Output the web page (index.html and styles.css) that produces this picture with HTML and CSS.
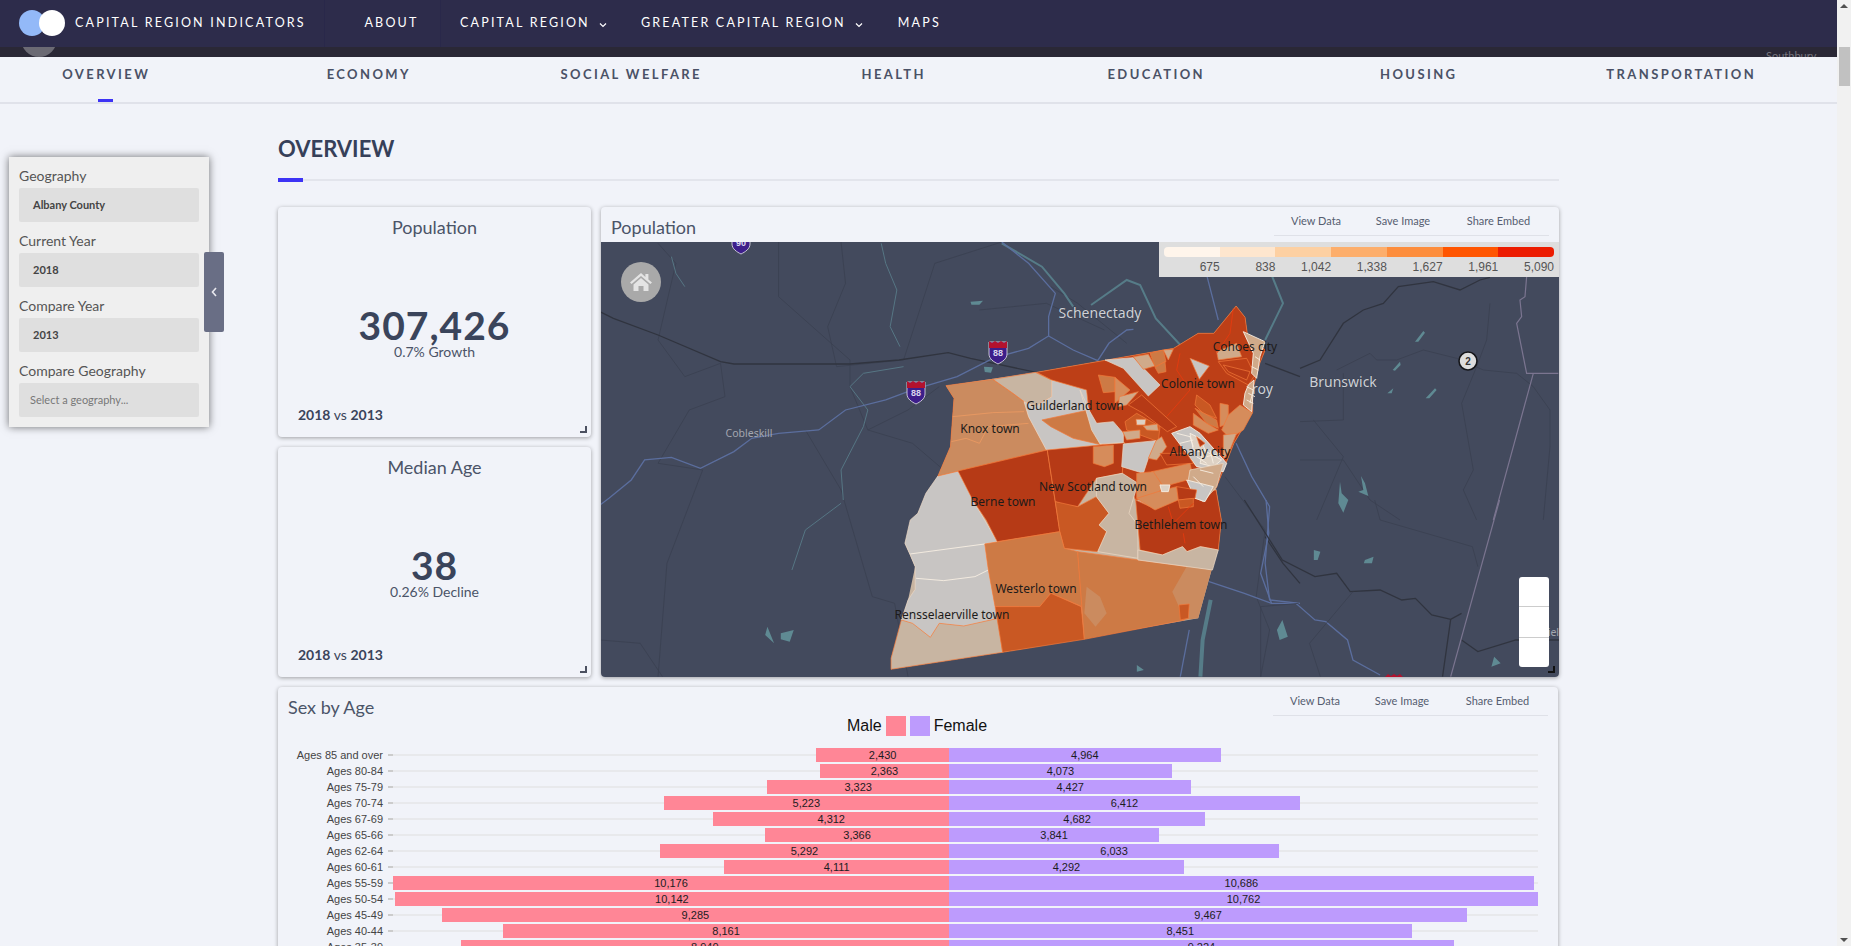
FILE: index.html
```html
<!DOCTYPE html>
<html lang="en">
<head>
    <meta charset="UTF-8">
    <title>Capital Region Indicators</title>
    <link rel="stylesheet" href="styles.css">
</head>
<body>
<div class="frame">
<div class="page">
    <div class="topnav">
        <a class="brand">
            <span class="logo"><i class="dot-blue"></i><i class="dot-white"></i></span>
            CAPITAL REGION INDICATORS
        </a>
        <a class="nav-about">ABOUT</a>
        <a class="nav-capital">CAPITAL REGION <svg class="caret" viewBox="0 0 8 6"><path d="M1 1.5 4 4.5 7 1.5"/></svg></a>
        <a class="nav-greater">GREATER CAPITAL REGION <svg class="caret" viewBox="0 0 8 6"><path d="M1 1.5 4 4.5 7 1.5"/></svg></a>
        <a class="nav-maps">MAPS</a>
    </div>
    <div class="hero-strip">
        <span class="hero-circle"></span>
        <span class="hero-town">Southbury</span>
    </div>
    <div class="subnav">
        <div class="subnav-inner">
            <a class="active">OVERVIEW</a>
            <a>ECONOMY</a>
            <a>SOCIAL WELFARE</a>
            <a>HEALTH</a>
            <a>EDUCATION</a>
            <a>HOUSING</a>
            <a>TRANSPORTATION</a>
        </div>
    </div>

    <div class="layout">
        <div class="side">
            <div class="filters">
                <label>Geography</label>
                <div class="fake-select">Albany County</div>
                <label>Current Year</label>
                <div class="fake-select">2018</div>
                <label>Compare Year</label>
                <div class="fake-select">2013</div>
                <label>Compare Geography</label>
                <div class="fake-select placeholder">Select a geography...</div>
                <div class="filters-toggle">
                    <svg viewBox="0 0 8 12"><path d="M6 2 2.5 6 6 10"/></svg>
                </div>
            </div>
        </div>

        <div class="main">
            <h1 class="section-title">OVERVIEW</h1>
            <div class="section-rule"><span></span></div>

            <div class="top-row">
                <div class="stat-col">
                    <div class="card stat">
                        <h3>Population</h3>
                        <div class="stat-mid">
                            <div class="stat-num">307,426</div>
                            <div class="stat-sub">0.7% Growth</div>
                        </div>
                        <div class="stat-foot"><b>2018</b> vs <b>2013</b></div>
                    </div>
                    <div class="card stat">
                        <h3>Median Age</h3>
                        <div class="stat-mid">
                            <div class="stat-num">38</div>
                            <div class="stat-sub">0.26% Decline</div>
                        </div>
                        <div class="stat-foot"><b>2018</b> vs <b>2013</b></div>
                    </div>
                </div>

                <div class="card map-card">
                    <div class="card-head">
                        <h2>Population</h2>
                        <div class="tabs"><a>View Data</a><a>Save Image</a><a>Share Embed</a></div>
                    </div>
                    <div class="map">
                        <svg class="map-svg" viewBox="601 242 958 435" width="958" height="435">
                            <!-- background roads, coords taken from zoomed crops -->
                            <g transform="translate(600 230) scale(.4464 .3333)">
                                <path class="road-thin" d="M130 40 170 100 130 330 190 440 270 400 280 500 200 540 130 700 230 720 150 1000 130 1340"/>
                                <path class="road-thin" d="M400 36 400 200 560 390 560 470 600 600 700 640 770 720 800 640"/>
                                <path class="road-thin" d="M540 36 550 160 510 290 530 410 680 390 750 100 900 36"/>
                                <path class="road-thin" d="M460 600 540 780 610 1100 660 1120 690 1340"/>
                                <path class="road-thin" d="M0 1230 90 1240 140 1340M600 600 690 540 760 470"/>
                                <path class="road-thin" d="M1010 170 1070 220 1180 340M850 240 1000 220 1130 300"/>
                                <path class="road-thick" d="M0 245 30 265 130 315 270 395 300 402 560 402 670 390 780 368 830 385 980 428"/>
                                <path class="road-thick" d="M1400 140 1370 60M1490 400 1568 440M1490 920 1530 1000 1568 1060"/>
                                <path class="road-thin" d="M1400 740 1490 900 1470 1100 1500 1200 1480 1340"/>
                                <path class="water-line" d="M630 40 640 100 665 180 650 290 672 350"/>
                                <path class="water-line" d="M160 80 170 130 190 170M545 810 540 720 590 590 600 540 560 470 590 430 680 410"/>
                                <path class="water-line" d="M430 1020 460 900 540 820"/>
                                <path class="water-wide" d="M1100 225 1180 150 1210 165 1245 265 1300 345"/>
                                <path class="water-wide" d="M1500 120 1530 220 1490 330"/>
                                <path class="water-wide" d="M900 40 990 110 1040 190 1060 230"/>
                                <path class="water-wide big" d="M1368 1110 1350 1230 1345 1340"/>
                                <path class="river" d="M0 825 20 805 70 750 100 690 160 682 225 715 300 665 340 625 400 610 490 600 550 540 640 510 700 480 800 440 880 385 960 355 1005 318 1005 260 1020 190 960 100 900 36"/>
                                <path class="river" d="M1005 318 1060 360 1115 392 1140 340 1180 300 1195 298"/>
                                <path class="river" d="M1360 140 1385 270M1425 640 1460 740 1500 830 1490 1000 1500 1110 1568 1120"/>
                                <path class="river" d="M1300 1340 1320 1200"/>
                                <path class="lake" d="M830 215 858 212 850 224 832 224zM860 410 880 412 876 428 862 426zM375 1190 390 1240 370 1215zM405 1210 434 1200 425 1235 405 1228z"/>
                            </g>
                            <g transform="translate(1000 500) scale(.543 .3333)">
                                <path class="river" d="M385 245 450 280 500 310 545 310 580 360 600 365 640 420 650 480 700 525"/>
                                <path class="river" d="M490 0 495 100 480 220 500 310"/>
                                <path class="road-thick" d="M450 0 520 180 580 230 620 220 645 275 700 270 740 300 765 295 795 345 830 358 850 340"/>
                                <path class="road-thick" d="M830 358 815 530M850 420 880 455 950 420 1030 420"/>
                                <path class="road-thin" d="M690 0 700 60 870 140 880 200M650 275 570 430 590 530M480 530 480 320 550 310"/>
                                <path class="state-line" d="M920 0 830 530"/>
                                <path class="lake" d="M578 150 590 155 585 180 578 180zM672 180 688 170 685 190 670 190zM520 360 530 410 515 420 510 390zM910 470 922 490 905 500zM252 495 265 510 252 515z"/>
                            </g>
                            <g transform="translate(1300 240) scale(.3333)">
                                <path class="road-thick" d="M0 385 60 360 130 250 190 210 250 190 295 140 400 125 480 150 540 120 570 112"/>
                                <path class="road-thin" d="M570 190 560 300 530 380 485 490 520 690 490 750 530 840"/>
                                <path class="road-thin" d="M110 390 210 340 230 360 290 360 370 330 470 355 550 390 650 400 700 440 750 510 750 620 730 840"/>
                                <path class="road-thin" d="M130 400 130 540 0 545M0 660 130 660 210 780 300 840M40 540 130 650 50 840"/>
                                <path class="state-line" d="M680 110 675 170 660 180 665 230 650 250 680 400 775 400M700 400 580 840"/>
                                <path class="lake" d="M345 305 370 273 375 278 355 305zM278 390 300 365 302 375 285 392zM262 460 280 445 275 460zM377 475 405 445 410 450 388 475zM120 725 125 760 145 780 130 818 115 790zM183 708 195 730 205 768 175 755 190 750z"/>
                            </g>
                            <text class="lbl-city" x="1259" y="394">Troy</text>

                            <!-- county blocks -->
                            <g class="towns" transform="translate(600 230) scale(.4464 .3333)">
                                <polygon class="f-sand line-none" points="775,467 978,427 1285,355 1340,310 1375,310 1425,228 1445,262 1450,310 1490,360 1478,400 1462,480 1462,545 1420,640 1380,775 1392,870 1385,960 1370,1020 1340,1165 902,1267 652,1318 652,1285 690,1110 706,1010 683,940 712,850 757,738 785,650 793,505"/>
                                <polygon class="f-grey line-pale" points="757,738 802,723 835,810 890,935 862,942 870,1020 885,1130 892,1165 815,1188 760,1180 740,1222 700,1180 675,1170 690,1110 706,1078 706,1010 695,975 683,940 695,870 712,850 730,790"/>
                                <path class="line-white" d="M695 972 862 942M708 1045 770 1052 840 1040 870 1020"/>
                                <polygon class="f-sand" points="675,1170 700,1180 740,1222 760,1180 815,1188 892,1165 902,1267 652,1318 652,1285"/>
                                <polygon class="f-knox" points="775,467 880,448 925,490 950,515 960,560 1000,660 757,738 785,650 793,505"/>
                                <path class="line-orange" d="M787 635 820 625 850 640 870 590 960 580M790 560 880 548 950 545"/>
                                <polygon class="f-sand" points="880,448 975,427 1012,450 1012,500 975,530 950,515 925,490"/>
                                <polygon class="f-grey line-pale" points="1012,450 1090,475 1095,540 1130,620 1125,645 1000,660 960,560 950,515 975,530 1012,500"/>
                                <polygon class="f-mid" points="990,570 1095,540 1125,645 1060,625 1010,590"/>
                                <polygon class="f-deep" points="802,723 1002,660 1030,905 890,935 865,870 835,810"/>
                                <polygon class="f-base" points="978,427 1285,355 1340,310 1375,310 1425,228 1445,262 1450,310 1490,360 1478,400 1462,480 1462,545 1420,640 1380,775 1200,810 1170,730 1175,638 1125,645 1095,540 1090,480 1012,450"/>
                                <polygon class="f-deep" points="1002,660 1175,638 1170,730 1112,745 1070,830 1040,825 1020,815"/>
                                <polygon class="f-light" points="1105,650 1150,645 1150,700 1130,710 1105,700"/>
                                <polygon class="f-strong" points="1020,815 1070,830 1112,800 1140,850 1118,885 1135,905 1115,965 1040,955 1030,905"/>
                                <polygon class="f-sand line-pale" points="1112,745 1170,730 1205,760 1185,850 1205,885 1205,985 1115,965 1135,905 1118,885 1140,850 1112,800"/>
                                <polygon class="f-mid" points="862,942 1030,905 1040,955 1070,965 1080,1130 1010,1090 985,1130 940,1130 885,1130 870,1020"/>
                                <polygon class="f-strong" points="885,1130 940,1130 985,1130 1010,1090 1078,1130 1085,1228 902,1267"/>
                                <polygon class="f-mid" points="1070,965 1205,990 1315,1010 1290,1080 1310,1170 1085,1228"/>
                                <polygon class="f-knox line-none" points="1090,1070 1120,1100 1135,1150 1110,1190 1085,1150"/>
                                <polygon class="f-knox line-none" points="1315,1008 1370,1020 1340,1165 1310,1170 1282,1085"/>
                                <polygon class="f-strong" points="1297,1125 1320,1122 1318,1165 1300,1170"/>
                                <polygon class="f-deep" points="1200,810 1240,835 1290,810 1380,780 1392,870 1385,960 1345,950 1315,965 1305,950 1260,975 1210,960 1205,885"/>
                                <polygon class="f-sand line-pale" points="1205,960 1260,975 1305,950 1315,965 1345,950 1385,960 1372,1020 1205,990"/>
                            </g>
                            <g class="towns" transform="translate(1080 290) scale(.3333)">
                                <polygon class="f-grey line-pale" points="75,210 160,203 240,285 205,318 130,235"/>
                                <polygon class="f-tan" points="160,200 205,193 225,228 190,238"/>
                                <polygon class="f-mid" points="210,190 250,180 258,215 225,230"/>
                                <polygon class="f-mid" points="225,232 255,215 258,245 235,250"/>
                                <polygon class="f-tan" points="250,180 280,178 265,210"/>
                                <polygon class="f-grey" points="330,205 388,228 358,268"/>
                                <polygon class="f-mid" points="55,255 105,262 105,305 70,308"/>
                                <polygon class="f-light" points="105,262 150,300 105,340 105,305"/>
                                <polygon class="f-grey line-pale" points="0,300 30,365 50,400 100,395 130,430 130,458 60,462 35,420"/>
                                <polygon class="f-tan" points="118,320 175,305 140,345 115,350"/>
                                <polygon class="f-strong" points="135,395 170,370 240,410 235,455 140,420"/>
                                <polygon class="f-deep" points="145,345 185,315 290,410 262,425 190,370"/>
                                <polygon class="f-tan" points="128,425 180,420 180,445 140,450"/>
                                <polygon class="f-pale" points="168,388 198,388 195,405 170,405"/>
                                <polygon class="f-tan" points="190,408 232,402 235,422 200,420"/>
                                <polygon class="f-grey line-pale" points="130,462 228,452 205,505 190,550 125,530"/>
                                <polygon class="f-tan" points="228,452 245,440 260,470 230,510 205,505"/>
                                <polygon class="f-strong" points="350,315 390,345 410,385 370,370 345,345"/>
                                <polygon class="f-base" points="415,215 500,205 525,255 505,285 440,250"/>
                                <polygon class="f-deep" points="430,225 510,245 500,270 445,245"/>
                                <polygon class="f-tan" points="410,185 470,160 485,200 415,210"/>
                                <polygon class="f-light" points="420,340 445,345 445,400 420,410"/>
                                <polygon class="f-mid" points="345,355 410,390 415,415 380,400"/>
                                <polygon class="f-light" points="340,370 380,400 415,420 385,430 340,405"/>
                                <polygon class="f-light" points="480,345 518,368 490,420 450,445 425,420 445,375"/>
                                <polygon class="f-tan" points="430,435 470,430 450,480 430,510"/>
                                <polygon class="f-tan line-white" points="505,285 522,270 515,365 490,345 495,310"/>
                                <polygon class="f-tan line-white" points="490,125 555,155 540,200 530,265 515,250 520,190"/>
                                <polygon class="f-grey line-white" points="275,430 330,410 360,430 440,520 430,545 350,530 320,490"/>
                                <polygon class="f-pale line-white" points="330,430 360,445 380,490 340,480"/>
                                <polygon class="f-pale line-white" points="370,480 425,510 400,530 360,520"/>
                                <polygon class="f-deep" points="350,440 375,460 360,470"/>
                                <polygon class="f-deep" points="240,490 320,490 340,520 260,525"/>
                                <polygon class="f-light" points="215,545 330,520 340,565 250,590"/>
                                <polygon class="f-tan line-pale" points="330,540 430,520 410,590 370,635 340,620 325,570"/>
                                <polygon class="f-grey line-white" points="320,570 400,590 375,635 345,625"/>
                                <polygon class="f-light" points="170,550 220,545 250,590 225,620 170,625"/>
                                <polygon class="f-light" points="170,625 250,600 290,590 295,630 225,660"/>
                                <polygon class="f-deep" points="290,590 350,600 345,625 295,630"/>
                                <polygon class="f-strong" points="295,630 340,625 340,650 300,655"/>
                                <polygon class="f-pale line-white" points="240,585 270,585 265,605 245,605"/>
                                <path class="line-red" d="M460 55 450 130 410 190M300 190 290 240 330 300 260 380M310 730 315 760M265 650 280 700 340 640"/>
                                <path class="line-white" d="M500 290 520 300 510 340M525 200 540 210M515 230 535 240M505 310 525 320M500 330 520 340M290 430 330 440 340 470M300 460 340 450M380 500 420 490M400 520 390 480M350 500 380 520M360 540 400 550M340 560 370 590"/>
                            </g>

                            <!-- shields -->
                            <g class="shield" transform="translate(741 241)"><path class="shield-body" d="M-9 -9H9V3C9 8 4 11 0 13 -4 11 -9 8 -9 3Z"/><text y="5">90</text></g>
                            <g class="shield" transform="translate(916 391)"><path class="shield-body" d="M-9 -9H9V3C9 8 4 11 0 13 -4 11 -9 8 -9 3Z"/><path class="shield-top" d="M-9 -10 -6 -8 -3 -10 0 -8 3 -10 6 -8 9 -10V-3H-9Z"/><text y="5">88</text></g>
                            <g class="shield" transform="translate(998 351)"><path class="shield-body" d="M-9 -9H9V3C9 8 4 11 0 13 -4 11 -9 8 -9 3Z"/><path class="shield-top" d="M-9 -10 -6 -8 -3 -10 0 -8 3 -10 6 -8 9 -10V-3H-9Z"/><text y="5">88</text></g>
                            <path class="shield-top" d="M1385 677 1388 674 1391 676 1394 674 1397 676 1400 674 1403 677Z"/>

                            <g class="badge"><circle cx="1468" cy="361" r="9"/><text x="1468" y="365">2</text></g>

                            <text class="lbl-city" x="1100" y="318">Schenectady</text>
                            <text class="lbl-city" x="1343" y="387">Brunswick</text>
                            <text class="lbl-small" x="749" y="437">Cobleskill</text>
                            <text class="lbl-small" x="1544" y="636">Pittsfield</text>

                            <text class="lbl-town" x="1245" y="351">Cohoes city</text>
                            <text class="lbl-town" x="1198" y="388">Colonie town</text>
                            <text class="lbl-town" x="1075" y="410">Guilderland town</text>
                            <text class="lbl-town" x="990" y="433">Knox town</text>
                            <text class="lbl-town" x="1200" y="456">Albany city</text>
                            <text class="lbl-town" x="1093" y="491">New Scotland town</text>
                            <text class="lbl-town" x="1003" y="506">Berne town</text>
                            <text class="lbl-town" x="1181" y="529">Bethlehem town</text>
                            <text class="lbl-town" x="1036" y="593">Westerlo town</text>
                            <text class="lbl-town" x="952" y="619">Rensselaerville town</text>
                        </svg>

                        <div class="home-btn">
                            <svg viewBox="0 0 24 24"><path d="M12 3 1 12.5l1.6 1.6L12 6l9.4 8.1 1.6-1.6-3.6-3.1V4h-3v3zM4.5 14.5 12 8l7.5 6.5V21h-5v-5h-5v5h-5z"/></svg>
                        </div>
                        <div class="map-legend">
                            <div class="legend-bar">
                                <i class="c1"></i><i class="c2"></i><i class="c3"></i><i class="c4"></i><i class="c5"></i><i class="c6"></i><i class="c7"></i>
                            </div>
                            <div class="legend-labels">
                                <span>675</span><span>838</span><span>1,042</span><span>1,338</span><span>1,627</span><span>1,961</span><span>5,090</span>
                            </div>
                        </div>
                        <div class="zoom-ctrl"><span></span><span></span><span></span></div>
                    </div>
                </div>
            </div>

            <div class="card chart-card">
                <div class="card-head chart-head">
                    <h2>Sex by Age</h2>
                    <div class="tabs"><a>View Data</a><a>Save Image</a><a>Share Embed</a></div>
                </div>
                <div class="chart-legend">
                    <span>Male</span><i class="swatch-m"></i><i class="swatch-f"></i><span>Female</span>
                </div>
                <div class="pyramid">
                    <div class="row"><div class="age">Ages 85 and over</div><div class="half left"><div class="bar m" style="width:23.88%">2,430</div></div><div class="half right"><div class="bar f" style="width:46.13%">4,964</div></div></div>
                    <div class="row"><div class="age">Ages 80-84</div><div class="half left"><div class="bar m" style="width:23.22%">2,363</div></div><div class="half right"><div class="bar f" style="width:37.85%">4,073</div></div></div>
                    <div class="row"><div class="age">Ages 75-79</div><div class="half left"><div class="bar m" style="width:32.66%">3,323</div></div><div class="half right"><div class="bar f" style="width:41.14%">4,427</div></div></div>
                    <div class="row"><div class="age">Ages 70-74</div><div class="half left"><div class="bar m" style="width:51.33%">5,223</div></div><div class="half right"><div class="bar f" style="width:59.58%">6,412</div></div></div>
                    <div class="row"><div class="age">Ages 67-69</div><div class="half left"><div class="bar m" style="width:42.37%">4,312</div></div><div class="half right"><div class="bar f" style="width:43.5%">4,682</div></div></div>
                    <div class="row"><div class="age">Ages 65-66</div><div class="half left"><div class="bar m" style="width:33.08%">3,366</div></div><div class="half right"><div class="bar f" style="width:35.69%">3,841</div></div></div>
                    <div class="row"><div class="age">Ages 62-64</div><div class="half left"><div class="bar m" style="width:52%">5,292</div></div><div class="half right"><div class="bar f" style="width:56.06%">6,033</div></div></div>
                    <div class="row"><div class="age">Ages 60-61</div><div class="half left"><div class="bar m" style="width:40.4%">4,111</div></div><div class="half right"><div class="bar f" style="width:39.88%">4,292</div></div></div>
                    <div class="row"><div class="age">Ages 55-59</div><div class="half left"><div class="bar m" style="width:100%">10,176</div></div><div class="half right"><div class="bar f" style="width:99.29%">10,686</div></div></div>
                    <div class="row"><div class="age">Ages 50-54</div><div class="half left"><div class="bar m" style="width:99.67%">10,142</div></div><div class="half right"><div class="bar f" style="width:100%">10,762</div></div></div>
                    <div class="row"><div class="age">Ages 45-49</div><div class="half left"><div class="bar m" style="width:91.24%">9,285</div></div><div class="half right"><div class="bar f" style="width:87.97%">9,467</div></div></div>
                    <div class="row"><div class="age">Ages 40-44</div><div class="half left"><div class="bar m" style="width:80.2%">8,161</div></div><div class="half right"><div class="bar f" style="width:78.53%">8,451</div></div></div>
                    <div class="row"><div class="age">Ages 35-39</div><div class="half left"><div class="bar m" style="width:87.85%">8,940</div></div><div class="half right"><div class="bar f" style="width:85.71%">9,224</div></div></div>
                </div>
            </div>
        </div>
    </div>
</div>
<div class="scroll-track">
    <span class="arrow-up"></span>
    <span class="scroll-thumb"></span>
    <span class="arrow-down"></span>
</div>
</div>
</body>
</html>
```

FILE: styles.css
```css
* {
    box-sizing: border-box;
}
html, body {
    margin: 0;
    height: 100%;
    overflow: hidden;
}
body {
    font-family: Lato, "Open Sans", sans-serif;
    background-color: #f1f3f9;
    color: #3c4559;
}
.frame {
    display: flex;
    height: 100vh;
    overflow: hidden;
}
.page {
    flex: 1;
    min-width: 0;
    overflow: hidden;
}

/* top bar */
.topnav {
    height: 47px;
    background-color: #2d2c4b;
    color: #fff;
    display: flex;
    align-items: center;
    font-size: 12.5px;
    letter-spacing: 2.2px;
    white-space: nowrap;
}
.topnav a {
    display: flex;
    align-items: center;
    height: 100%;
    padding-bottom: 3px;
}
.brand {
    width: 325px;
    padding-left: 19px;
    border-right: 1px solid #29284a;
}
.logo {
    display: flex;
    width: 46px;
    margin: 2px 10px 0 0;
}
.logo i {
    width: 26px;
    height: 26px;
    border-radius: 50%;
    flex: none;
}
.dot-blue {
    background-color: #93b9f8;
}
.dot-white {
    background-color: #fff;
    margin-left: -6px;
}
.nav-about {
    width: 116px;
    padding-left: 18px;
    justify-content: center;
    border-right: 1px solid #29284a;
}
.nav-capital {
    margin-left: 19px;
}
.nav-greater {
    margin-left: 34px;
}
.nav-maps {
    margin-left: 35px;
}
.caret {
    width: 8px;
    height: 6px;
    margin: 5px 0 0 9px;
    fill: none;
    stroke: #fff;
    stroke-width: 1.2;
}

.hero-strip {
    height: 10px;
    background-color: #2a2836;
    position: relative;
    overflow: hidden;
}
.hero-circle {
    position: absolute;
    left: 21px;
    top: -26px;
    width: 36px;
    height: 36px;
    border-radius: 50%;
    background-color: #6b6a74;
}
.hero-town {
    position: absolute;
    left: 1766px;
    top: 2px;
    font-size: 11px;
    color: #77767f;
}

/* section tabs */
.subnav {
    height: 47px;
    border-bottom: 2px solid #e0e2ea;
    overflow: hidden;
}
.subnav-inner {
    display: grid;
    grid-template-columns: repeat(7, 262.5px);
    margin-left: -25px;
    height: 45px;
}
.subnav a {
    position: relative;
    text-align: center;
    font-size: 13px;
    font-weight: 700;
    letter-spacing: 2.4px;
    color: #4a5166;
    padding-top: 9px;
}
.subnav a.active::after {
    content: "";
    position: absolute;
    left: 50%;
    bottom: 0;
    width: 15px;
    height: 3px;
    margin-left: -8px;
    background-color: #3d33f5;
}

.layout {
    display: flex;
}
.side {
    width: 278px;
    flex: none;
    padding: 53px 0 0 9px;
}
.filters {
    position: relative;
    width: 200px;
    height: 270px;
    padding: 10px;
    background-color: #efefef;
    box-shadow: 0 0 8px rgba(0, 0, 0, 0.55);
}
.filters label {
    display: block;
    height: 21px;
    line-height: 18px;
    font-size: 14px;
    color: #555;
}
.fake-select {
    height: 34px;
    margin-bottom: 10px;
    padding: 0 14px;
    line-height: 33px;
    font-size: 11px;
    font-weight: 700;
    color: #444;
    background-color: #dfdfdf;
    border-radius: 2px;
}
.fake-select.placeholder {
    padding: 0 11px;
    font-weight: 400;
    color: #777;
}
.filters-toggle {
    position: absolute;
    left: 195px;
    top: 95px;
    width: 20px;
    height: 80px;
    background-color: #696e85;
    border-radius: 2px;
    display: flex;
    align-items: center;
    justify-content: center;
}
.filters-toggle svg {
    width: 8px;
    height: 12px;
    fill: none;
    stroke: #e8e8ee;
    stroke-width: 1.6;
}

.main {
    width: 1281px;
    flex: none;
}
.section-title {
    margin: 0;
    padding-top: 30px;
    height: 75px;
    line-height: 30px;
    font-size: 22px;
    font-weight: 700;
    color: #364059;
}
.section-rule {
    height: 2px;
    background-color: #e3e5ec;
    position: relative;
}
.section-rule span {
    position: absolute;
    left: 0;
    top: -1px;
    width: 25px;
    height: 4px;
    background-color: #3d33f5;
}

.card {
    position: relative;
    background-color: #f1f3f9;
    border-radius: 4px;
    box-shadow: 0 1px 4px rgba(0, 0, 0, 0.35);
}
.card::after {
    content: "";
    position: absolute;
    right: 4px;
    bottom: 4px;
    width: 5px;
    height: 5px;
    border-right: 2px solid #4b5060;
    border-bottom: 2px solid #4b5060;
}
.top-row {
    display: flex;
    gap: 10px;
    margin-top: 26px;
    height: 470px;
}
.stat-col {
    width: 313px;
    display: flex;
    flex-direction: column;
    gap: 10px;
}
.stat {
    height: 230px;
    padding: 9px 20px 0;
    text-align: center;
}
.stat h3 {
    margin: 0;
    height: 22px;
    line-height: 22px;
    font-size: 18px;
    font-weight: 400;
    color: #4b5468;
}
.stat-mid {
    padding-top: 66px;
    height: 137px;
}
.stat-num {
    font-size: 39px;
    line-height: 42px;
    font-weight: 700;
    color: #3a445b;
    letter-spacing: 1px;
}
.stat-sub {
    margin-top: -2px;
    line-height: 16px;
    font-size: 14px;
    color: #4b5468;
}
.stat-foot {
    margin-top: 32px;
    line-height: 16px;
    text-align: left;
    font-size: 14px;
    color: #3a445b;
}

.map-card {
    width: 958px;
    overflow: hidden;
}
.map-card::after {
    border-color: #111;
    z-index: 2;
}
.card-head {
    height: 35px;
    display: flex;
    justify-content: space-between;
    padding: 0 10px 0 10px;
}
.card-head h2 {
    margin: 0;
    padding-top: 9px;
    font-size: 18px;
    line-height: 22px;
    font-weight: 400;
    color: #4b5468;
}
.tabs {
    width: 275px;
    height: 29px;
    display: grid;
    grid-template-columns: 84px 90px 101px;
    font-size: 11px;
    line-height: 28px;
    text-align: center;
    color: #555d70;
    border-bottom: 1px solid #dfe1e8;
}
.map {
    position: relative;
    height: 435px;
    background-color: #434a5d;
    overflow: hidden;
}
.map-svg {
    display: block;
}
.map-svg * {
    vector-effect: non-scaling-stroke;
}
.road-thin {
    fill: none;
    stroke: #3a4051;
    stroke-width: 0.8;
}
.road-thick {
    fill: none;
    stroke: #30343f;
    stroke-width: 1.3;
}
.river {
    fill: none;
    stroke: #5b6e9e;
    stroke-width: 1.3;
}
.water-line {
    fill: none;
    stroke: #567684;
    stroke-width: 1;
}
.water-wide {
    fill: none;
    stroke: #567c88;
    stroke-width: 2;
}
.water-wide.big {
    stroke-width: 4;
}
.lake {
    fill: #5f8a93;
}
.state-line {
    fill: none;
    stroke: #7b7590;
    stroke-width: 1.2;
}
.towns polygon {
    stroke: #f2793a;
    stroke-width: 0.7;
}
.towns path {
    fill: none;
}
.towns .line-pale {
    stroke: #ecd9c4;
}
.towns .line-white {
    stroke: #f7eee2;
    stroke-width: 0.9;
}
.towns .line-orange {
    stroke: #ee9a62;
    stroke-width: 0.8;
}
.towns .line-none {
    stroke: none;
}
.towns .line-red {
    stroke: #ea3a0e;
    stroke-width: 0.8;
}
.f-base {
    fill: #bd3f17;
}
.f-deep {
    fill: #b63a16;
}
.f-strong {
    fill: #c95823;
}
.f-mid {
    fill: #cd7a45;
}
.f-knox {
    fill: #cb8b5f;
}
.f-light {
    fill: #d68c5b;
}
.f-tan {
    fill: #d0aa8a;
}
.f-sand {
    fill: #c8b5a2;
}
.f-pale {
    fill: #ddd1c4;
}
.f-grey {
    fill: #c8c5c3;
}
.map-svg text {
    text-anchor: middle;
}
.lbl-town {
    font-family: "Noto Sans", sans-serif;
    font-size: 12px;
    fill: #1d1b1a;
}
.lbl-city {
    font-family: "Noto Sans", sans-serif;
    font-size: 14px;
    fill: #cdd0d6;
    stroke: #2c303c;
    stroke-width: 0.4;
    paint-order: stroke;
}
.lbl-small {
    font-family: "Noto Sans", sans-serif;
    font-size: 10.5px;
    fill: #a3a7b0;
}
.shield-body {
    fill: #3d1e8a;
    stroke: #e8e6ee;
    stroke-width: 0.8;
}
.shield-top {
    fill: #b3122e;
}
.shield text {
    font-family: "Liberation Sans", sans-serif;
    font-size: 9px;
    font-weight: 700;
    fill: #d9d5ee;
}
.badge circle {
    fill: #dddddd;
    stroke: #15161a;
    stroke-width: 1.6;
}
.badge text {
    font-family: "Liberation Sans", sans-serif;
    font-size: 10px;
    font-weight: 700;
    fill: #333;
}
.home-btn {
    position: absolute;
    left: 20px;
    top: 20px;
    width: 40px;
    height: 40px;
    border-radius: 50%;
    background-color: #a9a9a9;
    display: flex;
    align-items: center;
    justify-content: center;
}
.home-btn svg {
    width: 24px;
    height: 24px;
    fill: #e4e4e4;
}
.map-legend {
    position: absolute;
    right: 0;
    top: 0;
    width: 400px;
    height: 35px;
    padding: 5px 5px 0;
    background-color: #dedede;
    font-family: "Liberation Sans", sans-serif;
    font-size: 12px;
    color: #555;
}
.legend-bar {
    display: grid;
    grid-template-columns: repeat(7, 1fr);
    height: 10px;
    border-radius: 4px;
    overflow: hidden;
}
.legend-bar .c1 { background-color: #fff5eb; }
.legend-bar .c2 { background-color: #fee6ce; }
.legend-bar .c3 { background-color: #fdd0a2; }
.legend-bar .c4 { background-color: #fdae6b; }
.legend-bar .c5 { background-color: #fd8d3c; }
.legend-bar .c6 { background-color: #ff5500; }
.legend-bar .c7 { background-color: #ec1c00; }
.legend-labels {
    display: grid;
    grid-template-columns: repeat(7, 1fr);
    text-align: right;
    margin-top: 3px;
    line-height: 14px;
}
.zoom-ctrl {
    position: absolute;
    right: 10px;
    bottom: 10px;
    width: 30px;
    height: 90px;
    background-color: #fff;
    border-radius: 3px;
    display: flex;
    flex-direction: column;
}
.zoom-ctrl span {
    flex: 1;
    border-bottom: 1px solid #ccc;
}
.zoom-ctrl span:last-child {
    border-bottom: none;
}

/* sex by age */
.chart-card {
    margin-top: 10px;
    height: 400px;
    width: 1280px;
    overflow: hidden;
}
.chart-head {
    height: 29px;
}
.chart-legend {
    display: flex;
    justify-content: flex-start;
    align-items: center;
    height: 20px;
    padding-left: 569px;
    gap: 4px;
    font-family: "Liberation Sans", sans-serif;
    font-size: 16px;
    color: #111;
}
.chart-legend i {
    width: 20px;
    height: 20px;
}
.swatch-m {
    background-color: #ff8696;
}
.swatch-f {
    background-color: #bd9bfd;
}
.pyramid {
    margin-top: 12px;
    padding-left: 10px;
    font-family: "Liberation Sans", sans-serif;
    font-size: 11px;
}
.row {
    display: grid;
    grid-template-columns: 105px 556px 589px;
    height: 16px;
    line-height: 14px;
}
.age {
    position: relative;
    text-align: right;
    padding-right: 10px;
    color: #444;
}
.age::after {
    content: "";
    position: absolute;
    right: 0;
    top: 6px;
    width: 5px;
    height: 2px;
    background-color: #ccc;
}
.half {
    display: flex;
    height: 14px;
    background: linear-gradient(#e8e9ec, #e8e9ec) 0 6px / 100% 2px no-repeat;
}
.half.left {
    justify-content: flex-end;
}
.bar {
    text-align: center;
    color: #1c1c22;
}
.bar.m {
    background-color: #ff8696;
}
.bar.f {
    background-color: #bd9bfd;
}

.scroll-track {
    width: 14px;
    flex: none;
    background-color: #f1f1f1;
    display: flex;
    flex-direction: column;
    align-items: center;
    position: relative;
}
.arrow-up {
    margin-top: 4px;
    border-left: 4px solid transparent;
    border-right: 4px solid transparent;
    border-bottom: 4px solid #505050;
}
.scroll-thumb {
    width: 11px;
    height: 39px;
    margin-top: 39px;
    margin-left: 1px;
    background-color: #c1c1c1;
}
.arrow-down {
    margin-top: auto;
    margin-bottom: 4px;
    border-left: 4px solid transparent;
    border-right: 4px solid transparent;
    border-top: 4px solid #505050;
}
```
